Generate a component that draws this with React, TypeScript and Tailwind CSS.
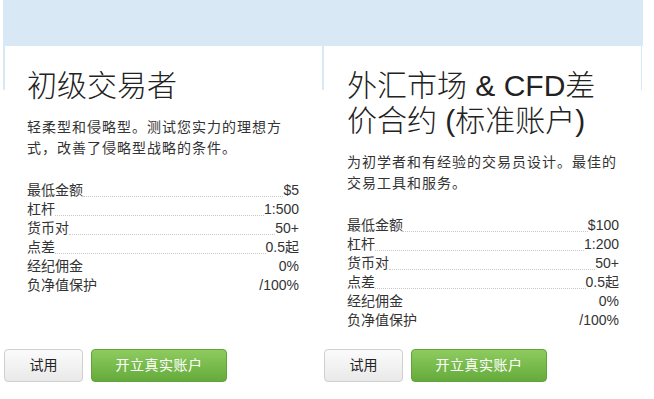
import React from "react";

type Row = { label: string; value: string; dotted: boolean };

const font = { fontFamily: '"Liberation Sans", "Noto Sans CJK SC", sans-serif' };

function Card({
  title,
  desc,
  rows,
  side,
}: {
  title: string;
  desc: string;
  rows: Row[];
  side: "left" | "right";
}) {
  return (
    <div className="relative flex flex-col bg-white">
      <div className="h-[46px] bg-[#d8e9f5]" />
      {side === "left" ? (
        <>
          <div className="absolute left-0 top-[46px] h-[44px] w-[2px] bg-[#d8e9f5]" />
          <div className="absolute right-0 top-[46px] h-[44px] w-[1px] bg-[#d8e9f5]" />
        </>
      ) : (
        <>
          <div className="absolute left-0 top-[46px] h-[44px] w-[1px] bg-[#d8e9f5]" />
          <div className="absolute right-[1px] top-[46px] h-[44px] w-[1px] bg-[#d8e9f5]" />
        </>
      )}
      <div className="px-[24px] pt-[22px]">
        <h2 className="text-[30px] leading-[35px] font-light text-[#222]">{title}</h2>
        <p className="mt-[14px] text-[14px] leading-[21px] tracking-[1px] text-[#333]">{desc}</p>
        <div className="mt-[22px] text-[14px] text-[#333]">
          {rows.map((r) => (
            <div key={r.label} className="flex h-[19px] leading-[19px]">
              <span>{r.label}</span>
              <span
                className={
                  r.dotted
                    ? "mb-[3px] flex-1 border-b border-dotted border-[#c8c8c8]"
                    : "flex-1"
                }
              />
              <span>{r.value}</span>
            </div>
          ))}
        </div>
      </div>
      <div className="mt-auto flex gap-[8px] pl-[1px] pt-[19px] pb-[17px]">
        <button className="h-[33px] w-[79px] rounded-[4px] border border-[#cfcfcf] bg-gradient-to-b from-[#fbfbfb] to-[#e9e9e9] text-[14px] text-[#222]">
          试用
        </button>
        <button className="h-[33px] w-[136px] rounded-[4px] border border-[#62a23c] bg-gradient-to-b from-[#8ecb5f] to-[#64ab3b] text-[14px] tracking-[0.5px] text-white">
          开立真实账户
        </button>
      </div>
    </div>
  );
}

export default function App() {
  const left: Row[] = [
    { label: "最低金额", value: "$5", dotted: true },
    { label: "杠杆", value: "1:500", dotted: true },
    { label: "货币对", value: "50+", dotted: true },
    { label: "点差", value: "0.5起", dotted: true },
    { label: "经纪佣金", value: "0%", dotted: false },
    { label: "负净值保护", value: "/100%", dotted: false },
  ];
  const right: Row[] = [
    { label: "最低金额", value: "$100", dotted: true },
    { label: "杠杆", value: "1:200", dotted: true },
    { label: "货币对", value: "50+", dotted: true },
    { label: "点差", value: "0.5起", dotted: true },
    { label: "经纪佣金", value: "0%", dotted: false },
    { label: "负净值保护", value: "/100%", dotted: false },
  ];
  return (
    <div className="min-h-[399px] w-[654px] bg-white" style={font}>
      <div className="ml-[3px] grid w-[640px] grid-cols-2">
        <Card
          side="left"
          title="初级交易者"
          desc="轻柔型和侵略型。测试您实力的理想方式，改善了侵略型战略的条件。"
          rows={left}
        />
        <Card
          side="right"
          title="外汇市场 & CFD差价合约 (标准账户)"
          desc="为初学者和有经验的交易员设计。最佳的交易工具和服务。"
          rows={right}
        />
      </div>
    </div>
  );
}
